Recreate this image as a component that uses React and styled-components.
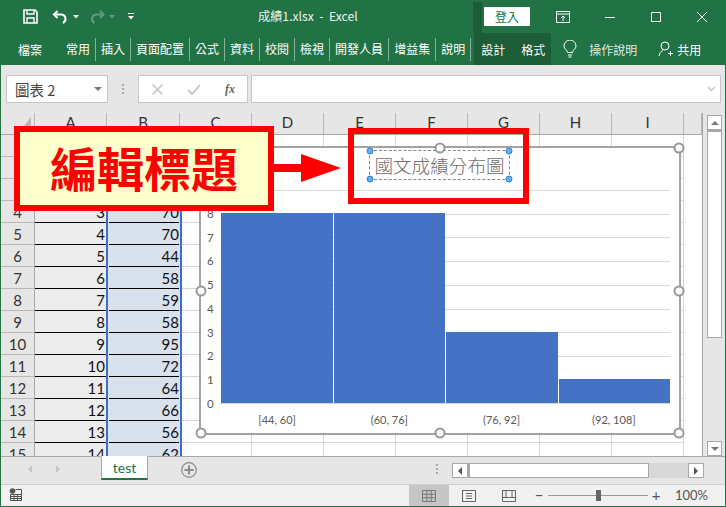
import React from "react";
import styled, { createGlobalStyle } from "styled-components";

const GlobalStyle = createGlobalStyle`
  html, body {
    margin: 0;
    padding: 0;
    overflow: hidden;
    background: #e6e6e6;
  }
`;

const CJK = `"Noto Sans CJK TC", "Noto Sans", sans-serif`;
const LATIN = `Lato, "Noto Sans CJK TC", sans-serif`;
const GREEN = "#217346";
const DARK_GREEN = "#1d5c38";

const Window = styled.div`
  position: relative;
  width: 726px;
  height: 507px;
  box-sizing: border-box;
  border: solid ${GREEN};
  border-width: 0 1px 1px 1px;
  display: flex;
  flex-direction: column;
  overflow: hidden;
  font-family: ${CJK};
  background: #e6e6e6;
`;

/* title bar */
const TitleBar = styled.div`
  height: 33px;
  flex: none;
  background: ${GREEN};
  display: flex;
  align-items: center;
  color: #fff;
`;

const Qat = styled.div`
  width: 257px;
  flex: none;
  padding-left: 22px;
  box-sizing: border-box;
  display: flex;
  align-items: center;
  gap: 0;
`;

const QatIcon = styled.svg`
  display: block;
  flex: none;
  margin-right: ${(p) => p.$gap || 0}px;
`;

const DocName = styled.div`
  width: 215px;
  flex: none;
  font-size: 12.2px;
  white-space: pre;
  color: #fff;
  opacity: 0.92;
  margin-top: -1px;
`;

const ContextStrip = styled.div`
  width: 9px;
  height: 31px;
  align-self: flex-end;
  flex: none;
  background: ${DARK_GREEN};
`;

const SignIn = styled.div`
  width: 46px;
  height: 19px;
  margin: -1px 0 0 2px;
  flex: none;
  background: #fff;
  color: ${GREEN};
  font-size: 12px;
  line-height: 19px;
  text-align: center;
  border-radius: 1px;
`;

const WindowButtons = styled.div`
  flex: 1;
  display: flex;
  align-items: center;
  padding-left: 26px;
`;

const WindowIcon = styled.svg`
  display: block;
  flex: none;
  margin-right: ${(p) => p.$gap || 0}px;
`;

/* ribbon tabs */
const Ribbon = styled.div`
  height: 32px;
  flex: none;
  background: ${GREEN};
  display: flex;
  align-items: center;
  color: #fff;
  font-size: 12px;
`;

const FileTab = styled.div`
  width: 60px;
  padding-left: 17px;
  box-sizing: border-box;
  flex: none;
`;

const Tab = styled.div`
  padding: 0 5px;
  height: 23px;
  line-height: 22px;
  white-space: nowrap;
  flex: none;
  border-right: 1px solid rgba(255, 255, 255, 0.45);
`;

const ContextTabs = styled.div`
  align-self: stretch;
  display: flex;
  align-items: center;
  width: 77px;
  margin-left: 3px;
  flex: none;
  background: ${DARK_GREEN};
  padding-left: 7px;
  gap: 16px;
  box-sizing: border-box;
`;

const TellMe = styled.div`
  display: flex;
  align-items: center;
  margin-left: 12px;
  flex: none;
  gap: 12px;
  color: rgba(255, 255, 255, 0.88);
`;

const Share = styled.div`
  display: flex;
  align-items: center;
  margin-left: 21px;
  gap: 4px;
  flex: none;
`;

/* formula bar */
const FormulaBar = styled.div`
  height: 48px;
  flex: none;
  box-sizing: border-box;
  padding: 10px 5px 10px 5px;
  display: flex;
  align-items: stretch;
  background: #e6e6e6;
`;

const Field = styled.div`
  box-sizing: border-box;
  background: #fff;
  border: 1px solid #c6c6c6;
  display: flex;
  align-items: center;
`;

const NameBox = styled(Field)`
  width: 102px;
  padding: 0 5px 0 8px;
  justify-content: space-between;
  font-size: 14.5px;
  color: #444;
`;

const DropArrow = styled.span`
  width: 0;
  height: 0;
  border-left: 4px solid transparent;
  border-right: 4px solid transparent;
  border-top: 4px solid #777;
`;

const Grip = styled.div`
  width: 30px;
  flex: none;
  display: flex;
  align-items: center;
  justify-content: center;
  &::before {
    content: "";
    width: 2px;
    height: 10px;
    background: repeating-linear-gradient(#aaa 0 2px, transparent 2px 4px);
  }
`;

const FxBox = styled(Field)`
  width: 110px;
  padding-left: 13px;
  gap: 24px;
`;

const FxText = styled.span`
  font-family: "Liberation Serif", serif;
  font-style: italic;
  font-weight: 700;
  font-size: 12px;
  color: #666;
`;

const InputBox = styled(Field)`
  flex: 1;
  margin-left: 3px;
  margin-right: -1px;
  justify-content: flex-end;
  padding-right: 4px;
`;

/* sheet */
const Workspace = styled.div`
  position: relative;
  height: 343px;
  flex: none;
  display: flex;
  overflow: hidden;
  background: #e6e6e6;
`;

const Sheet = styled.div`
  width: 702px;
  flex: none;
  overflow: hidden;
  border-right: 1px solid #a8a8a8;
  box-sizing: border-box;
  background: #fff;
`;

const ColumnHeader = styled.div`
  display: grid;
  grid-template-columns: 34px 72px 73px repeat(7, 72px) 1fr;
  grid-template-rows: 21px;
  height: 22px;
  box-sizing: border-box;
  border-bottom: 1px solid #a8a8a8;
  background: #e6e6e6;
`;

const ColumnCell = styled.div`
  position: relative;
  border-right: 1px solid #b8b8b8;
  box-sizing: border-box;
  text-align: center;
  font: 15px/16px ${LATIN};
  color: #333;
  padding-top: 1px;
  overflow: hidden;
`;

const CornerMark = styled.div`
  position: absolute;
  right: 3px;
  bottom: 4px;
  width: 10px;
  height: 13px;
  background: #b5b5b5;
  clip-path: polygon(100% 0, 100% 100%, 0 100%);
`;

const Row = styled.div`
  display: grid;
  grid-template-columns: 34px 71px 76px 70px repeat(6, 72px) 1fr;
  grid-template-rows: 22px;
  height: 22px;
`;

const RowHead = styled.div`
  box-sizing: border-box;
  background: #e6e6e6;
  border-right: 1px solid #a8a8a8;
  border-bottom: 1px solid #b8b8b8;
  text-align: center;
  font: 15px/20px ${LATIN};
  padding-top: 1px;
  color: #333;
`;

const CellA = styled.div`
  box-sizing: border-box;
  background: #ececec;
  border-bottom: 1px solid #000;
  text-align: right;
  padding: 1px 1px 0 0;
  font: 15px/20px ${LATIN};
  color: #111;
`;

const CellB = styled(CellA)`
  background: linear-gradient(#000, #000) center bottom / calc(100% - 2px) 1px no-repeat, #d9e1ed;
  border: solid #3f6fc4;
  border-width: 0 2px;
  padding-right: 1px;
`;

const EmptyCell = styled.div`
  box-sizing: border-box;
  background: #fff;
  border-right: 1px solid #d6d6d6;
  border-bottom: 1px solid #d6d6d6;
`;

const VScroll = styled.div`
  flex: 1;
  display: flex;
  flex-direction: column;
  padding: 2px 3px 0 4px;
`;

const ScrollBtn = styled.div`
  box-sizing: border-box;
  background: #fff;
  border: 1px solid #a8a8a8;
  display: flex;
  align-items: center;
  justify-content: center;
  flex: none;
  height: 15px;
`;

const Triangle = styled.span`
  width: 0;
  height: 0;
  ${(p) =>
    p.$dir === "up" &&
    `border-left:4px solid transparent;border-right:4px solid transparent;border-bottom:4px solid #777;`}
  ${(p) =>
    p.$dir === "down" &&
    `border-left:4px solid transparent;border-right:4px solid transparent;border-top:4px solid #777;`}
  ${(p) =>
    p.$dir === "left" &&
    `border-top:4px solid transparent;border-bottom:4px solid transparent;border-right:4px solid ${p.$color || "#777"};`}
  ${(p) =>
    p.$dir === "right" &&
    `border-top:4px solid transparent;border-bottom:4px solid transparent;border-left:4px solid ${p.$color || "#777"};`}
`;

const VThumb = styled.div`
  height: 208px;
  flex: none;
  box-sizing: border-box;
  background: #fff;
  border: 1px solid #a8a8a8;
  border-top-width: 2px;
`;

const VTrack = styled.div`
  flex: 1;
`;

/* chart */
const Chart = styled.div`
  position: absolute;
  left: 198px;
  top: 33px;
  width: 482px;
  height: 289px;
  box-sizing: border-box;
  border: 2px solid #a3a3a3;
  background: #fff;
  display: flex;
  flex-direction: column;
  align-items: center;
`;

const Handle = styled.span`
  position: absolute;
  width: 11px;
  height: 11px;
  box-sizing: border-box;
  border-radius: 50%;
  background: #fff;
  border: 2px solid #999;
  left: ${(p) => p.$x}%;
  top: ${(p) => p.$y}%;
  transform: translate(-50%, -50%);
`;

const ChartTitle = styled.div`
  position: relative;
  width: 141px;
  height: 30px;
  box-sizing: border-box;
  margin: 2px 1px 0 0;
  border: 1px dashed #888;
  font-size: 18.6px;
  font-weight: 300;
  line-height: 28px;
  text-align: center;
  white-space: nowrap;
  color: #6e6e6e;
  flex: none;
`;

const TitleHandle = styled.span`
  position: absolute;
  width: 7px;
  height: 7px;
  box-sizing: border-box;
  border-radius: 50%;
  background: #5fb0f2;
  border: 1px solid #2a83cf;
  left: ${(p) => p.$x}%;
  top: ${(p) => p.$y}%;
  transform: translate(-50%, -50%);
`;

const PlotRow = styled.div`
  align-self: stretch;
  display: flex;
  margin-top: 10px;
  height: 213.75px;
  flex: none;
`;

const YAxis = styled.div`
  width: 20px;
  flex: none;
  display: flex;
  flex-direction: column;
  margin-top: 11.875px;
`;

const YLabel = styled.div`
  height: 23.75px;
  flex: none;
  padding-left: 6px;
  font: 11.5px/23.75px ${LATIN};
  color: #595959;
`;

const PlotArea = styled.div`
  width: 449px;
  flex: none;
  display: flex;
  align-items: flex-end;
  gap: 1px;
  box-sizing: border-box;
  background: repeating-linear-gradient(#d9d9d9 0 1px, transparent 1px 23.75px);
  border-bottom: 1px solid #d9d9d9;
`;

const Bar = styled.div`
  flex: 1;
  background: #4472c4;
  height: ${(p) => p.$count * 23.75}px;
`;

const XAxis = styled.div`
  display: flex;
  align-self: stretch;
  margin: 9px 0 0 20px;
  width: 449px;
`;

const XLabel = styled.div`
  flex: 1;
  text-align: center;
  font: 11px/14px ${LATIN};
  color: #595959;
`;

/* sheet tabs */
const TabBar = styled.div`
  height: 28px;
  flex: none;
  box-sizing: border-box;
  border-top: 1px solid #a8a8a8;
  background: #e6e6e6;
  display: flex;
  align-items: flex-start;
`;

const SheetNav = styled.div`
  width: 100px;
  height: 24px;
  flex: none;
  display: flex;
  align-items: center;
  padding-left: 27px;
  gap: 24px;
  box-sizing: border-box;
`;

const SheetTab = styled.div`
  width: 47px;
  height: 24px;
  margin-top: -1px;
  box-sizing: border-box;
  background: #fff;
  border: 1px solid #a8a8a8;
  border-top-color: #fff;
  border-bottom: 2px solid ${GREEN};
  color: ${GREEN};
  font: 14px/22px ${LATIN};
  text-align: center;
  flex: none;
`;

const AddSheet = styled.svg`
  display: block;
  margin: 5px 0 0 33px;
  flex: none;
`;

const TabGrip = styled(Grip)`
  width: 8px;
  height: 24px;
  margin-left: 236px;
`;

const HScroll = styled.div`
  width: 252px;
  height: 15px;
  margin: 6px 0 0 11px;
  flex: none;
  display: flex;
  background: #d8d8d8;
`;

const HBtn = styled(ScrollBtn)`
  width: 16px;
`;

const HThumb = styled.div`
  width: 181px;
  flex: none;
  box-sizing: border-box;
  background: #fff;
  border: 1px solid #a8a8a8;
  border-left-width: 2px;
`;

const HTrack = styled.div`
  flex: 1;
`;

/* status bar */
const StatusBar = styled.div`
  flex: 1;
  box-sizing: border-box;
  border-top: 1px solid #cfcfcf;
  background: #f1f1f1;
  display: flex;
  align-items: stretch;
  color: #444;
`;

const MacroIcon = styled.svg`
  display: block;
  margin: 3px 0 0 8px;
  flex: none;
`;

const ViewButton = styled.div`
  width: 40px;
  flex: none;
  display: flex;
  align-items: center;
  justify-content: center;
  background: ${(p) => (p.$active ? "#c6c6c6" : "transparent")};
  margin-left: ${(p) => p.$offset || 0}px;
`;

const ZoomBar = styled.div`
  display: flex;
  align-items: center;
  margin-left: 4px;
  flex: none;
`;

const ZoomSign = styled.span`
  font: 15px/15px ${LATIN};
  color: #555;
  width: 12px;
  text-align: center;
`;

const Slider = styled.div`
  position: relative;
  width: 100px;
  height: 1px;
  margin: 0 2px 0 3px;
  background: #9a9a9a;
  &::after {
    content: "";
    position: absolute;
    left: 48px;
    top: -5px;
    width: 5px;
    height: 11px;
    background: #666;
  }
`;

const ZoomValue = styled.span`
  font: 13px/15px ${LATIN};
  color: #555;
  margin-left: 13px;
`;

/* annotations */
const Callout = styled.div`
  position: absolute;
  left: 13px;
  top: 126px;
  width: 260px;
  height: 85px;
  box-sizing: border-box;
  border: 6px solid #ff0000;
  background: #ffffcc;
  color: #ff0000;
  font-size: 47px;
  font-weight: 700;
  line-height: 70px;
  text-align: center;
  white-space: nowrap;
`;

const Arrow = styled.svg`
  position: absolute;
  left: 272px;
  top: 152px;
`;

const Highlight = styled.div`
  position: absolute;
  left: 347px;
  top: 128px;
  width: 181px;
  height: 76px;
  box-sizing: border-box;
  border: 6px solid #ff0000;
`;

const scores = [
  null, null, null, [3, 70], [4, 70], [5, 44], [6, 58], [7, 59],
  [8, 58], [9, 95], [10, 72], [11, 64], [12, 66], [13, 56], [14, 62],
];
const columns = ["A", "B", "C", "D", "E", "F", "G", "H", "I", ""];
const tabs = ["常用", "插入", "頁面配置", "公式", "資料", "校閱", "檢視", "開發人員", "增益集", "說明"];
const bins = [
  { label: "[44, 60]", count: 8 },
  { label: "(60, 76]", count: 8 },
  { label: "(76, 92]", count: 3 },
  { label: "(92, 108]", count: 1 },
];
const frameHandles = [[0, 0], [50, 0], [100, 0], [0, 50], [100, 50], [0, 100], [50, 100], [100, 100]];
const titleHandles = [[0, 0], [100, 0], [0, 100], [100, 100]];

const App = () => {
  return (
    <Window>
      <GlobalStyle />
      <TitleBar>
        <Qat>
          <QatIcon $gap={14} width="15" height="15" viewBox="0 0 15 15" fill="none" stroke="#fff">
            <path d="M1 1h11l2 2v11H1z" strokeWidth="1.6" />
            <path d="M4 1.5v3.5h7V1.5" strokeWidth="1.4" />
            <path d="M4 14V9h7v5" strokeWidth="1.4" />
          </QatIcon>
          <QatIcon $gap={4} width="17" height="16" viewBox="0 0 17 16" fill="none" stroke="#fff" strokeWidth="2">
            <path d="M5.5 2 2 5.5 5.5 9" />
            <path d="M2.5 5.5h7a4.5 4.5 0 0 1 1.5 8.5" />
          </QatIcon>
          <QatIcon $gap={10} width="6" height="4" viewBox="0 0 6 4">
            <path d="M0 0h6L3 3.5z" fill="#fff" />
          </QatIcon>
          <QatIcon $gap={4} width="16" height="16" viewBox="0 0 16 16" fill="none" stroke="#5f9c7c" strokeWidth="2">
            <path d="M11 2l3.5 3.5L11 9" />
            <path d="M14 5.5H7a4.5 4.5 0 0 0-1.500 8.500" />
          </QatIcon>
          <QatIcon $gap={13} width="6" height="4" viewBox="0 0 6 4">
            <path d="M0 0h6L3 3.500z" fill="#5f9c7c" />
          </QatIcon>
          <QatIcon width="6" height="7" viewBox="0 0 6 7">
            <path d="M0 0h6v1H0zM0 3h6L3 6.500z" fill="#fff" />
          </QatIcon>
        </Qat>
        <DocName>成績1.xlsx  -  Excel</DocName>
        <ContextStrip />
        <SignIn>登入</SignIn>
        <WindowButtons>
          <WindowIcon $gap={35} width="14" height="12" viewBox="0 0 14 12" fill="none" stroke="#fff">
            <path d="M.5.500h13v11H.5zM.5 3h13" />
            <path d="M7 10V5M5 7l2-2 2 2" />
          </WindowIcon>
          <WindowIcon $gap={36} width="10" height="10" viewBox="0 0 10 10" stroke="#fff">
            <path d="M0 5.500h10" />
          </WindowIcon>
          <WindowIcon $gap={36} width="10" height="10" viewBox="0 0 10 10" fill="none" stroke="#fff">
            <path d="M.5.500h9v9h-9z" />
          </WindowIcon>
          <WindowIcon width="10" height="10" viewBox="0 0 10 10" stroke="#fff">
            <path d="M0 0l10 10M10 0 0 10" />
          </WindowIcon>
        </WindowButtons>
      </TitleBar>

      <Ribbon>
        <FileTab>檔案</FileTab>
        {tabs.map((t) => (
          <Tab key={t}>{t}</Tab>
        ))}
        <ContextTabs>
          <span>設計</span>
          <span>格式</span>
        </ContextTabs>
        <TellMe>
          <svg width="14" height="18" viewBox="0 0 14 18" fill="none" stroke="#fff" strokeWidth="1">
            <path d="M4.500 12.500C4 9.500 1 9 1 6a6 6 0 0 1 12 0c0 3-3 3.500-3.500 6.500z" />
            <path d="M5 15h4M5.500 17h3" />
          </svg>
          <span>操作說明</span>
        </TellMe>
        <Share>
          <svg width="15" height="16" viewBox="0 0 15 16" fill="none" stroke="#fff" strokeWidth="1">
            <circle cx="7" cy="5" r="4" />
            <path d="M1 15c.5-3 2-5 4-5.500M10 12.500h5M12.500 10v5" />
          </svg>
          <span>共用</span>
        </Share>
      </Ribbon>

      <FormulaBar>
        <NameBox>
          <span>圖表 2</span>
          <DropArrow />
        </NameBox>
        <Grip />
        <FxBox>
          <svg width="11" height="11" viewBox="0 0 11 11" stroke="#c4c4c4" strokeWidth="1.500">
            <path d="M.5.500l10 10M10.500.500l-10 10" />
          </svg>
          <svg width="14" height="11" viewBox="0 0 14 11" fill="none" stroke="#c4c4c4" strokeWidth="1.800">
            <path d="M1 6l4 4 8-9" />
          </svg>
          <FxText>fx</FxText>
        </FxBox>
        <InputBox>
          <svg width="9" height="6" viewBox="0 0 9 6" fill="none" stroke="#c4c4c4" strokeWidth="1.500">
            <path d="M1 1l3.500 3.500L8 1" />
          </svg>
        </InputBox>
      </FormulaBar>

      <Workspace>
        <Sheet>
          <ColumnHeader>
            <ColumnCell>
              <CornerMark />
            </ColumnCell>
            {columns.map((c, i) => (
              <ColumnCell key={i}>{c}</ColumnCell>
            ))}
          </ColumnHeader>
          {scores.map((s, i) => (
            <Row key={i}>
              <RowHead>{s ? i + 1 : ""}</RowHead>
              <CellA>{s && s[0]}</CellA>
              <CellB>{s && s[1]}</CellB>
              {Array.from({ length: 7 }, (_, k) => (
                <EmptyCell key={k} />
              ))}
            </Row>
          ))}
        </Sheet>
        <VScroll>
          <ScrollBtn>
            <Triangle $dir="up" />
          </ScrollBtn>
          <VThumb />
          <VTrack />
          <ScrollBtn>
            <Triangle $dir="down" />
          </ScrollBtn>
        </VScroll>

        <Chart>
          <ChartTitle>
            國文成績分布圖
            {titleHandles.map(([x, y]) => (
              <TitleHandle key={`${x}-${y}`} $x={x} $y={y} />
            ))}
          </ChartTitle>
          <PlotRow>
            <YAxis>
              {[8, 7, 6, 5, 4, 3, 2, 1, 0].map((n) => (
                <YLabel key={n}>{n}</YLabel>
              ))}
            </YAxis>
            <PlotArea>
              {bins.map((b) => (
                <Bar key={b.label} $count={b.count} />
              ))}
            </PlotArea>
          </PlotRow>
          <XAxis>
            {bins.map((b) => (
              <XLabel key={b.label}>{b.label}</XLabel>
            ))}
          </XAxis>
          {frameHandles.map(([x, y]) => (
            <Handle key={`${x}-${y}`} $x={x} $y={y} />
          ))}
        </Chart>
      </Workspace>

      <TabBar>
        <SheetNav>
          <Triangle $dir="left" $color="#c4c4c4" />
          <Triangle $dir="right" $color="#c4c4c4" />
        </SheetNav>
        <SheetTab>test</SheetTab>
        <AddSheet width="16" height="16" viewBox="0 0 16 16" fill="none" stroke="#8a8a8a">
          <circle cx="8" cy="8" r="7.300" strokeWidth="1.200" />
          <path d="M8 3.500v9M3.500 8h9" strokeWidth="2" />
        </AddSheet>
        <TabGrip />
        <HScroll>
          <HBtn>
            <Triangle $dir="left" $color="#555" />
          </HBtn>
          <HThumb />
          <HTrack />
          <HBtn>
            <Triangle $dir="right" $color="#555" />
          </HBtn>
        </HScroll>
      </TabBar>

      <StatusBar>
        <MacroIcon width="13" height="13" viewBox="0 0 13 13" fill="none" stroke="#555">
          <circle cx="3.500" cy="3" r="2.800" fill="#555" stroke="none" />
          <path d="M1.500 6.500h11v6h-11zM1.500 8.500h11M1.500 10.500h11M5 6.500v6M8.500 6.500v6M6.500 1.500h6v5" />
        </MacroIcon>
        <ViewButton $active $offset={387}>
          <svg width="14" height="12" viewBox="0 0 14 12" fill="none" stroke="#777">
            <path d="M.5.500h13v11H.5zM.5 4.200h13M.5 7.800h13M4.800.500v11M9.200.500v11" />
          </svg>
        </ViewButton>
        <ViewButton>
          <svg width="14" height="12" viewBox="0 0 14 12" fill="none" stroke="#666">
            <path d="M.5.500h13v11H.5zM4 3.500h6M4 6h6M4 8.500h6" />
          </svg>
        </ViewButton>
        <ViewButton>
          <svg width="14" height="12" viewBox="0 0 14 12" fill="none" stroke="#666">
            <path d="M.5.500h13v11H.5zM.5 7.500h13M4 .500v7M10 .500v7" />
          </svg>
        </ViewButton>
        <ZoomBar>
          <ZoomSign>−</ZoomSign>
          <Slider />
          <ZoomSign>+</ZoomSign>
          <ZoomValue>100%</ZoomValue>
        </ZoomBar>
      </StatusBar>

      <Callout>編輯標題</Callout>
      <Arrow width="70" height="32" viewBox="0 0 70 32">
        <path d="M0 12h28V2l40 14-40 14V20H0z" fill="#ff0000" />
      </Arrow>
      <Highlight />
    </Window>
  );
};

export default App;
